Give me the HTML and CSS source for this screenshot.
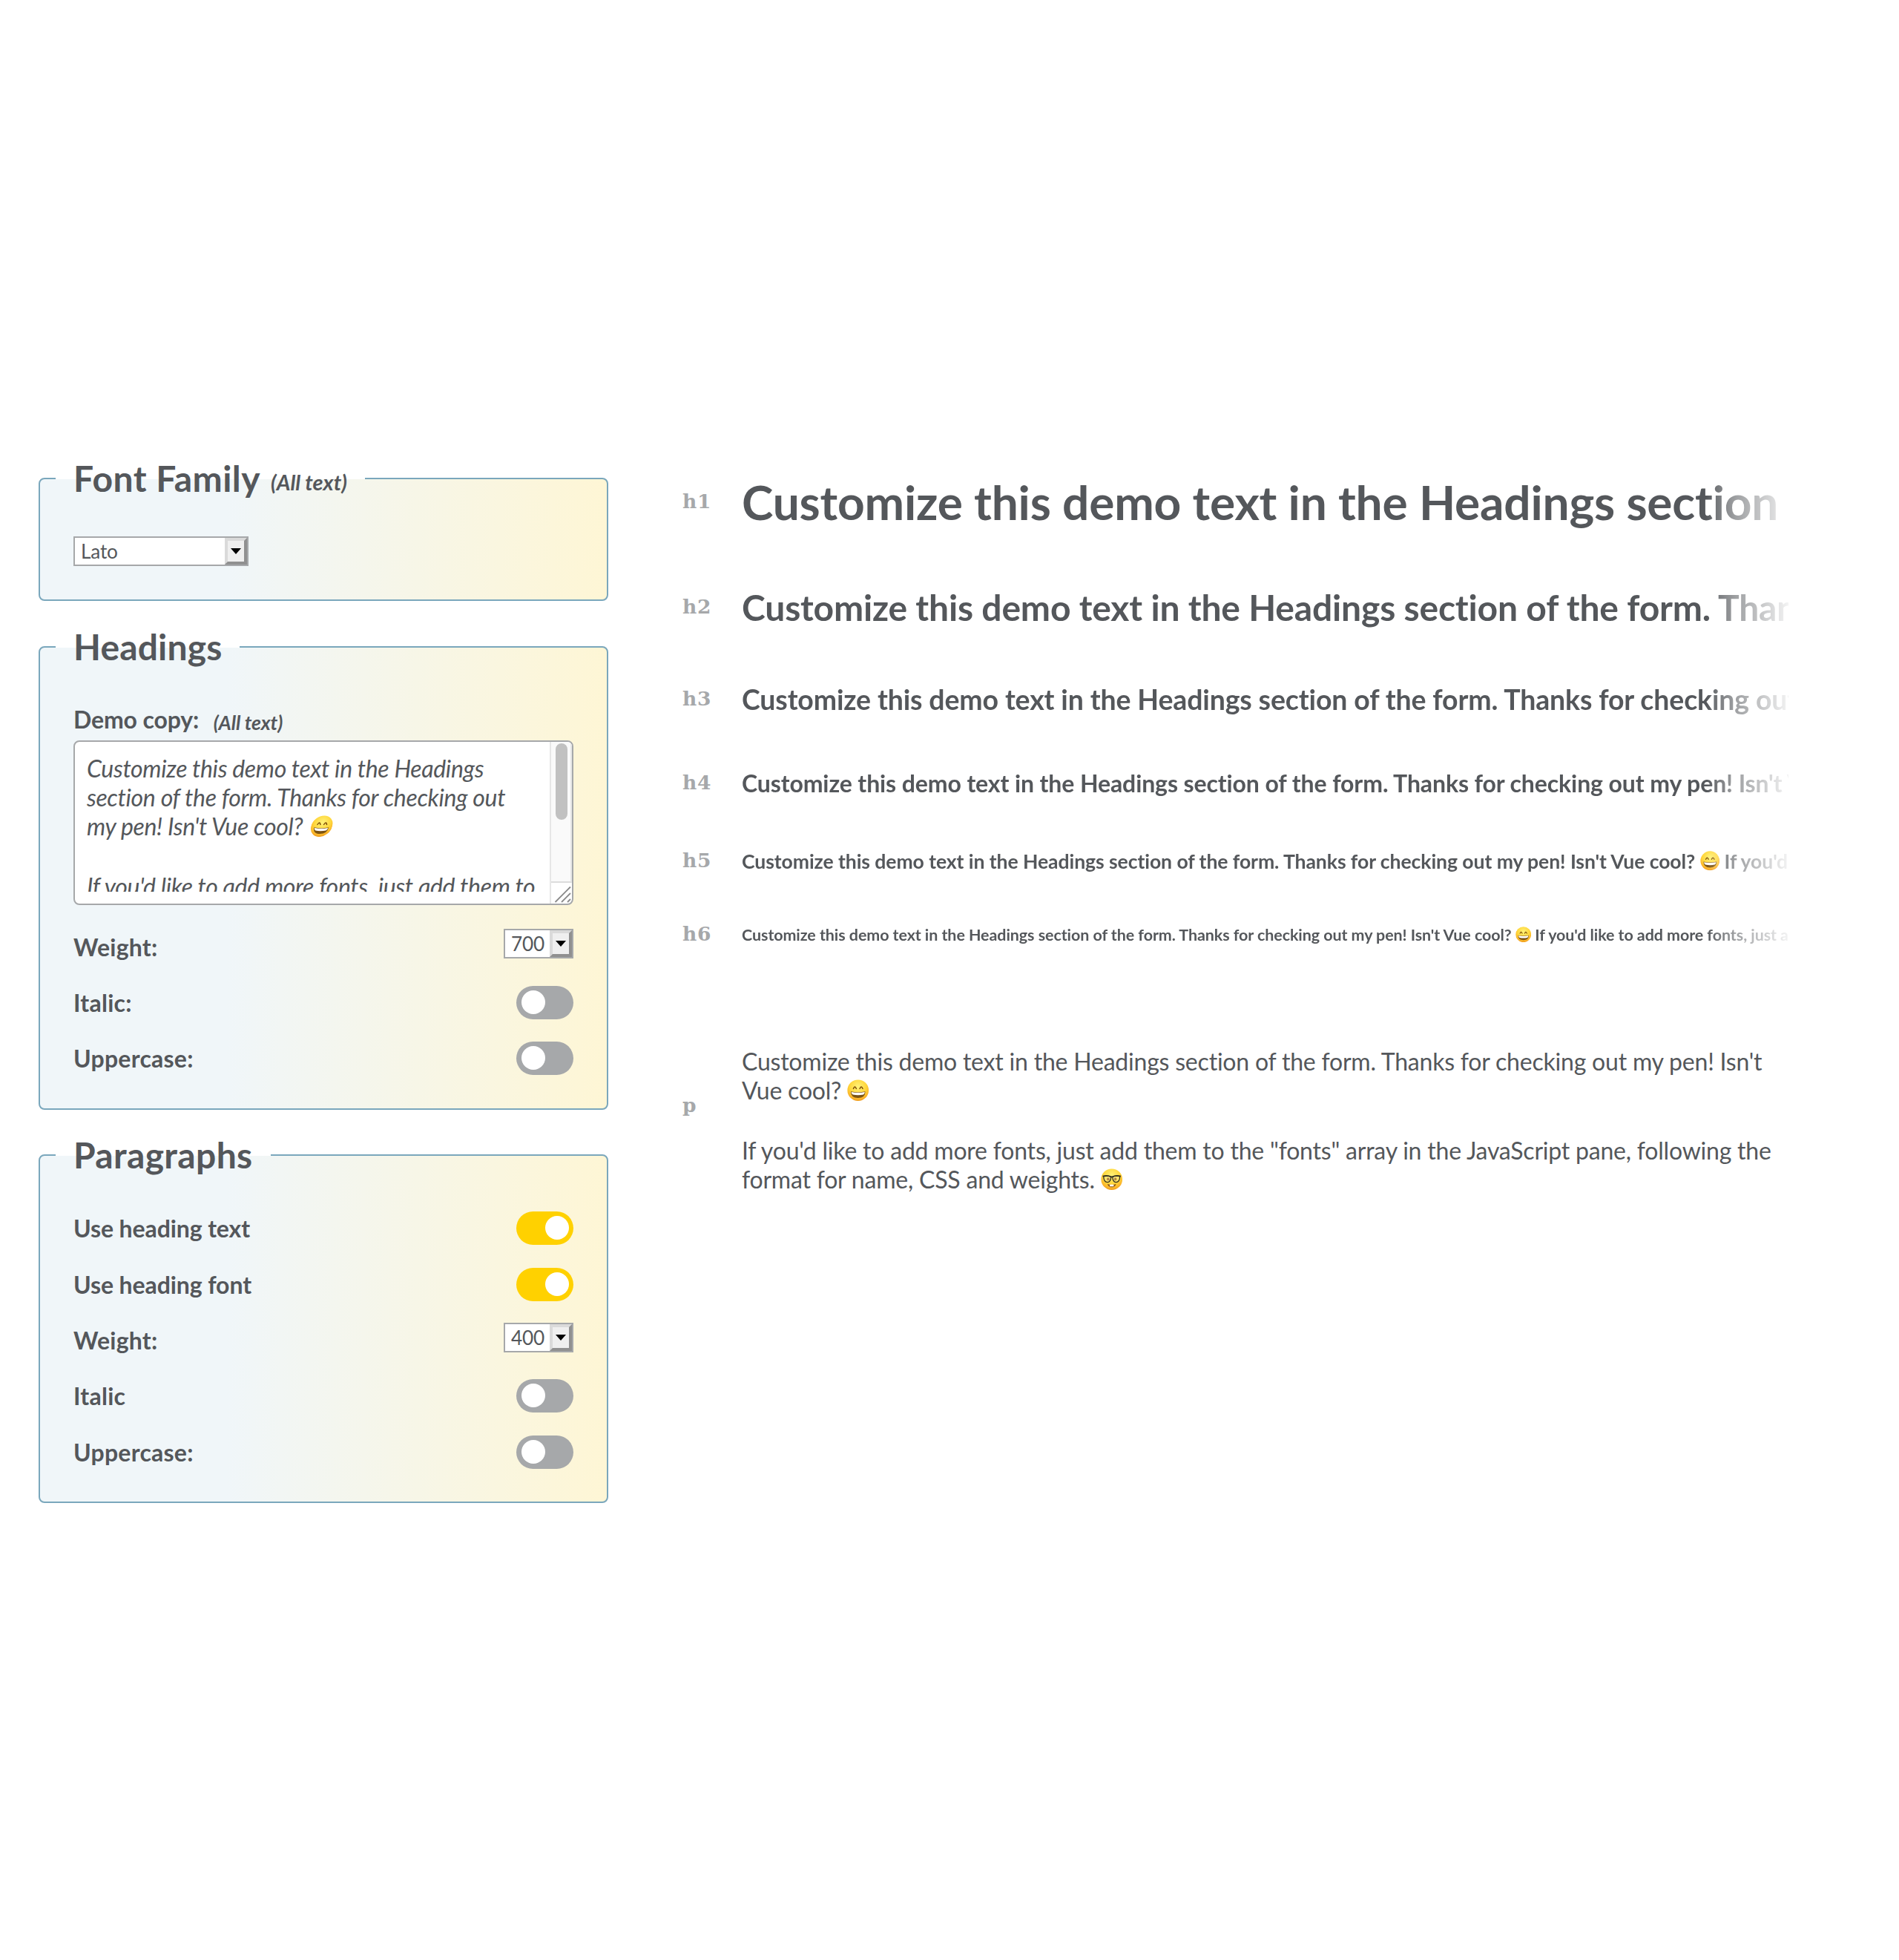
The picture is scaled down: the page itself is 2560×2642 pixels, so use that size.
FILE: index.html
```html
<!DOCTYPE html>
<html lang="en">
<head>
<meta charset="utf-8">
<title>Font Tester</title>
<link rel="stylesheet" href="styles.css">
</head>
<body>
<svg class="defs" width="0" height="0" aria-hidden="true">
  <defs>
    <radialGradient id="face" cx="50%" cy="32%" r="68%">
      <stop offset="0" stop-color="#fff27a"/><stop offset=".55" stop-color="#ffd83d"/><stop offset=".85" stop-color="#fbb62a"/><stop offset="1" stop-color="#ee9a1c"/>
    </radialGradient>
    <symbol id="smile" viewBox="0 0 30 30">
      <circle cx="15" cy="15" r="14.6" fill="url(#face)"/>
      <path d="M8.600 12.800q2-5 4 0M17.400 12.800q2-5 4 0" fill="none" stroke="#7a4a06" stroke-width="1.500" stroke-linecap="round"/>
      <path d="M5 16.500q10 2 20 0q0 9-10 9T5 16.500z" fill="#7c5312"/>
      <path d="M5.800 17.300q9.200 1.800 18.400 0q0 3-2 3.700q-7.200 1.500-14.400 0q-2-.7-2-3.700z" fill="#fff"/>
    </symbol>
    <symbol id="nerd" viewBox="0 0 30 30">
      <circle cx="15" cy="15" r="14.6" fill="url(#face)"/>
      <ellipse cx="10" cy="14.600" rx="1.800" ry="2.200" fill="#8a4b08"/><ellipse cx="20" cy="14.600" rx="1.800" ry="2.200" fill="#8a4b08"/>
      <path d="M3.800 11q5-1.600 10.200.6q-.5 7.400-4.800 7.400Q4 19 3.800 11zM26.200 11q-5-1.600-10.200.6q.5 7.400 4.800 7.400Q26 19 26.200 11z" fill="#fff3b0" fill-opacity=".35" stroke="#33301f" stroke-width="1.300"/>
      <path d="M2.600 10.800q6-2.200 12.400 1q6.400-3.200 12.400-1" fill="none" stroke="#33301f" stroke-width="1.700"/>
      <path d="M9 21.300q6 2.200 12 0q-1.500 4.500-6 4.500t-6-4.500z" fill="#8a5212"/>
      <path d="M12.300 22.200h5.400v2.600h-5.400z" fill="#fff"/>
    </symbol>
  </defs>
</svg>
<main class="page">
  <form class="controls">
    <fieldset class="panel panel-family">
      <legend class="legend">Font Family <em class="note">(All text)</em></legend>
      <div class="select select-wide"><span class="value">Lato</span><span class="arrow"></span></div>
    </fieldset>
    <fieldset class="panel panel-headings">
      <legend class="legend">Headings</legend>
      <div class="copy-label">Demo copy: <em class="note">(All text)</em></div>
      <div class="textarea">
        <div class="textarea-text">Customize this demo text in the Headings<br>section of the form. Thanks for checking out<br>my pen! Isn't Vue cool? <svg class="emoji slanted"><use href="#smile"/></svg><br><br><span class="second">If you'd like to add more fonts, just add them to</span></div>
        <div class="scroll">
          <div class="track"><div class="thumb"></div></div>
          <svg class="grip" width="28" height="28" viewBox="0 0 28 28"><path d="M5.500 26L26 5.500M14 26L26 14M22 26L26 22" fill="none" stroke="#8a8a8a" stroke-width="1.800"/></svg>
        </div>
      </div>
      <div class="row row-select"><span>Weight:</span><div class="select"><span class="value">700</span><span class="arrow"></span></div></div>
      <div class="row"><span>Italic:</span><i class="toggle"></i></div>
      <div class="row"><span>Uppercase:</span><i class="toggle"></i></div>
    </fieldset>
    <fieldset class="panel panel-paragraphs">
      <legend class="legend">Paragraphs</legend>
      <div class="row row-long"><span>Use heading text</span><i class="toggle on"></i></div>
      <div class="row row-long"><span>Use heading font</span><i class="toggle on"></i></div>
      <div class="row row-select"><span>Weight:</span><div class="select"><span class="value">400</span><span class="arrow"></span></div></div>
      <div class="row"><span>Italic</span><i class="toggle"></i></div>
      <div class="row"><span>Uppercase:</span><i class="toggle"></i></div>
    </fieldset>
  </form>
  <section class="demo">
    <div class="sample s1"><code class="tag">h1</code><h1 class="fade">Customize this demo text in the Headings section of the form.</h1></div>
    <div class="sample s2"><code class="tag">h2</code><h2 class="fade">Customize this demo text in the Headings section of the form. Thanks for checking</h2></div>
    <div class="sample s3"><code class="tag">h3</code><h3 class="fade">Customize this demo text in the Headings section of the form. Thanks for checking out my pen!</h3></div>
    <div class="sample s4"><code class="tag">h4</code><h4 class="fade">Customize this demo text in the Headings section of the form. Thanks for checking out my pen! Isn't Vue cool?</h4></div>
    <div class="sample s5"><code class="tag">h5</code><h5 class="fade">Customize this demo text in the Headings section of the form. Thanks for checking out my pen! Isn't Vue cool? <svg class="emoji"><use href="#smile"/></svg> If you'd like to add</h5></div>
    <div class="sample s6"><code class="tag">h6</code><h6 class="fade">Customize this demo text in the Headings section of the form. Thanks for checking out my pen! Isn't Vue cool? <svg class="emoji"><use href="#smile"/></svg> If you'd like to add more fonts, just add them</h6></div>
    <div class="sample sp"><code class="tag">p</code><div class="copy"><p>Customize this demo text in the Headings section of the form. Thanks for checking out my pen! Isn't<br>Vue cool? <svg class="emoji"><use href="#smile"/></svg></p><p>If you'd like to add more fonts, just add them to the "fonts" array in the JavaScript pane, following the<br>format for name, CSS and weights. <svg class="emoji"><use href="#nerd"/></svg></p></div></div>
  </section>
</main>
</body>
</html>
```
FILE: styles.css
```css
* { box-sizing: border-box; }
body {
  margin: 0;
  background: #fff;
  color: #54575b;
  font: 32px/39px Lato, "Open Sans", sans-serif;
  font-variant-ligatures: none;
}
.defs { position: absolute; }
.page {
  display: grid;
  grid-template-columns: 768px 1fr;
  column-gap: 100px;
  height: 2642px;
  padding: 616px 0 0 52px;
}

/* form */
.controls { display: flex; flex-direction: column; align-items: stretch; }
.panel {
  min-width: 0;
  margin: 0;
  padding: 0 45px;
  border: 2px solid #7aa7bc;
  border-radius: 8px;
  background: linear-gradient(90deg, #f0f6f9 33%, #fef6d5 100%);
}
.legend {
  margin-left: -24px;
  padding: 0 24px;
  font-size: 48px;
  font-weight: 700;
  line-height: 58px;
  letter-spacing: .35px;
}
.panel-family .legend { letter-spacing: .48px; }
.panel-headings .legend { letter-spacing: .15px; }
.note { line-height: 1; }
.legend .note { margin-left: 3px; font-size: 28.800px; letter-spacing: 0; vertical-align: 2px; }
.panel-family { height: 194px; }
.panel-headings { height: 653px; margin-top: 33px; }
.panel-paragraphs { height: 498px; margin-top: 32px; }

.select {
  display: flex;
  width: 94px;
  height: 40px;
  border: 2px solid #a6a8aa;
  background: #fff;
  font-size: 26.200px;
  line-height: 36px;
}
.select-wide { width: 236px; margin-top: 49px; }
.value { flex: 1; padding-left: 8px; font-weight: 400; letter-spacing: -.2px; }
.arrow {
  display: flex;
  width: 30px;
  border: 4px solid;
  border-color: #dadada #909090 #909090 #dadada;
  background: #efefef;
}
.arrow::before {
  content: "";
  margin: 10px 0 0 4px;
  height: 8px;
  border: solid transparent;
  border-width: 8px 7px 0;
  border-top-color: #000;
}

.copy-label { height: 39px; margin-top: 49px; font-weight: 700; letter-spacing: -.15px; }
.copy-label .note { margin-left: 12px; font-size: 26.600px; vertical-align: -2px; }
.textarea {
  display: flex;
  height: 222px;
  margin-top: 9px;
  border: 2px solid #a6a8aa;
  border-radius: 8px;
  background: #fff;
  overflow: hidden;
}
.textarea-text {
  flex: 1;
  min-width: 0;
  height: 202px;
  padding: 16px 0 0 16px;
  overflow: hidden;
  white-space: nowrap;
  font-style: italic;
  letter-spacing: -.34px;
}
.second { display: block; margin-top: 3px; }
.scroll { width: 30px; border-left: 2px solid #e7e7e7; }
.track { height: 190px; padding: 2px 0 0 6px; border-right: 2px solid #e7e7e7; border-bottom: 2px solid #dcdcdc; background: #fafafa; }
.thumb { width: 16px; height: 103px; border-radius: 8px; background: #c1c1c1; }
.grip { display: block; }

.row { display: flex; justify-content: space-between; align-items: center; height: 75.400px; font-weight: 700; letter-spacing: .25px; }
.row-long { letter-spacing: -.1px; }
.toggle { display: block; width: 77px; height: 45px; padding: 6px 7px; border-radius: 23px; background: #a6a8aa; }
.toggle::before { content: ""; display: block; width: 32px; height: 32px; border-radius: 50%; background: #fff; }
.toggle.on { background: #ffd100; padding-left: 39px; }
.row-select .select { margin-bottom: 8px; }
.panel-paragraphs .select { margin-bottom: 6.500px; }
.panel-headings .textarea + .row { margin-top: 18.500px; }
.panel-paragraphs .legend + .row { margin-top: 32px; }

/* samples */
.demo { display: flex; flex-direction: column; width: 1491px; }
.sample { display: grid; grid-template-columns: 80px 1411px; align-items: center; }
.sample h1, .sample h2, .sample h3, .sample h4, .sample h5, .sample h6, .sample p { margin: 0; }
.tag {
  color: #a6a8aa;
  font: bold 26.500px/30px "DejaVu Serif", serif;
  letter-spacing: .800px;
  padding-bottom: 2px;
}
.fade {
  overflow: hidden;
  white-space: nowrap;
  --fade: linear-gradient(90deg, #000 1300px, rgba(0,0,0,.78) 1317px, rgba(0,0,0,.56) 1340px, rgba(0,0,0,.33) 1375px, rgba(0,0,0,.18) 1395px, rgba(0,0,0,.04) 1415px);
  -webkit-mask-image: var(--fade);
  mask-image: var(--fade);
}
h1 { font-size: 64px; line-height: 78px; letter-spacing: -.18px; }
h2 { font-size: 48px; line-height: 58px; letter-spacing: -.178px; }
h3 { font-size: 37.440px; line-height: 46px; letter-spacing: -.12px; }
h4 { font-size: 32px; line-height: 40px; letter-spacing: -.107px; }
h5 { font-size: 26.560px; line-height: 34px; letter-spacing: -.065px; }
h6 { font-size: 21.440px; line-height: 28px; letter-spacing: -.055px; }
.s1 { margin-top: 22px; }
.s2 { margin-top: 73.500px; }
.s3 { margin-top: 72px; }
.s4 { margin-top: 70px; }
.s5 { margin-top: 68px; }
.s6 { margin-top: 66px; }
.sp { margin-top: 135.500px; }
.sp .tag { padding-bottom: 40px; }
.copy { letter-spacing: -.21px; }
.copy p + p { margin-top: 42px; }
.emoji { width: .92em; height: .92em; vertical-align: -.09em; }
h5 .emoji, h6 .emoji { width: 1em; height: 1em; vertical-align: -.12em; }
.textarea .slanted { margin-left: 3px; transform: skewX(-14deg); }
```
